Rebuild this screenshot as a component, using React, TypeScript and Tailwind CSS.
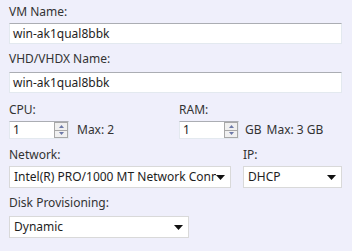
import React from "react";

const font = { fontFamily: '"Noto Sans", "Segoe UI", sans-serif' };

function Caret() {
  return (
    <svg width="9" height="5" viewBox="0 0 9 5" className="shrink-0">
      <path d="M0 0 H9 L4.5 5 Z" fill="#111" />
    </svg>
  );
}

function TextBox({ value }: { value: string }) {
  return (
    <div className="h-[21px] bg-white border border-[#e3e9ef] border-t-[#abadb3] flex items-center pl-[3px] text-[12px] text-[#1e1e1e]">
      {value}
    </div>
  );
}

function Spin({ value }: { value: string }) {
  return (
    <div className="w-[60px] h-[18px] bg-white border border-[#e3e9ef] border-t-[#abadb3] flex items-center text-[12px] text-[#1e1e1e]">
      <span className="flex-1 pl-[3px]">{value}</span>
      <div className="w-[14px] h-full flex flex-col border border-[#a8a8a8]">
        <div className="flex-1 flex items-center justify-center bg-[#f0f0f0] border-b border-[#a8a8a8]">
          <svg width="5" height="3" viewBox="0 0 5 3"><path d="M0 3 L2.5 0 L5 3 Z" fill="#6d79a8" /></svg>
        </div>
        <div className="flex-1 flex items-center justify-center bg-[#f0f0f0]">
          <svg width="5" height="3" viewBox="0 0 5 3"><path d="M0 0 L5 0 L2.5 3 Z" fill="#6d79a8" /></svg>
        </div>
      </div>
    </div>
  );
}

function Select({ value, className }: { value: string; className: string }) {
  return (
    <div className={`h-[22px] bg-white border border-[#d9d9d9] flex items-center pl-[4px] pr-[5px] text-[12px] text-[#1e1e1e] ${className}`}>
      <span className="flex-1 whitespace-nowrap overflow-hidden">{value}</span>
      <Caret />
    </div>
  );
}

export default function App() {
  return (
    <div className="w-[352px] h-[251px] bg-[#efeffb] pl-[9px] pr-[10px] pt-[1px] text-[12px] text-[#333] leading-[16px]" style={font}>
      <div className="h-[22px] flex items-center">VM Name:</div>
      <TextBox value="win-ak1qual8bbk" />
      <div className="h-[28px] flex items-end pb-[5px]">VHD/VHDX Name:</div>
      <TextBox value="win-ak1qual8bbk" />
      <div className="flex mt-[6px]">
        <div className="w-[170px] flex flex-col">
          <div className="h-[22px] flex items-center">CPU:</div>
          <div className="flex items-center gap-[8px]">
            <Spin value="1" />
            <span>Max: 2</span>
          </div>
        </div>
        <div className="flex flex-col">
          <div className="h-[22px] flex items-center">RAM:</div>
          <div className="flex items-center">
            <Spin value="1" />
            <span className="ml-[6px]">GB</span>
            <span className="ml-[5px]">Max: 3 GB</span>
          </div>
        </div>
      </div>
      <div className="flex mt-[5px]">
        <div className="w-[234px] flex flex-col">
          <div className="h-[22px] flex items-center">Network:</div>
          <Select value="Intel(R) PRO/1000 MT Network Connection" className="w-[222px]" />
        </div>
        <div className="flex-1 flex flex-col">
          <div className="h-[22px] flex items-center">IP:</div>
          <Select value="DHCP" className="w-full" />
        </div>
      </div>
      <div className="h-[28px] flex items-end pb-[5px]">Disk Provisioning:</div>
      <Select value="Dynamic" className="w-[180px]" />
    </div>
  );
}
